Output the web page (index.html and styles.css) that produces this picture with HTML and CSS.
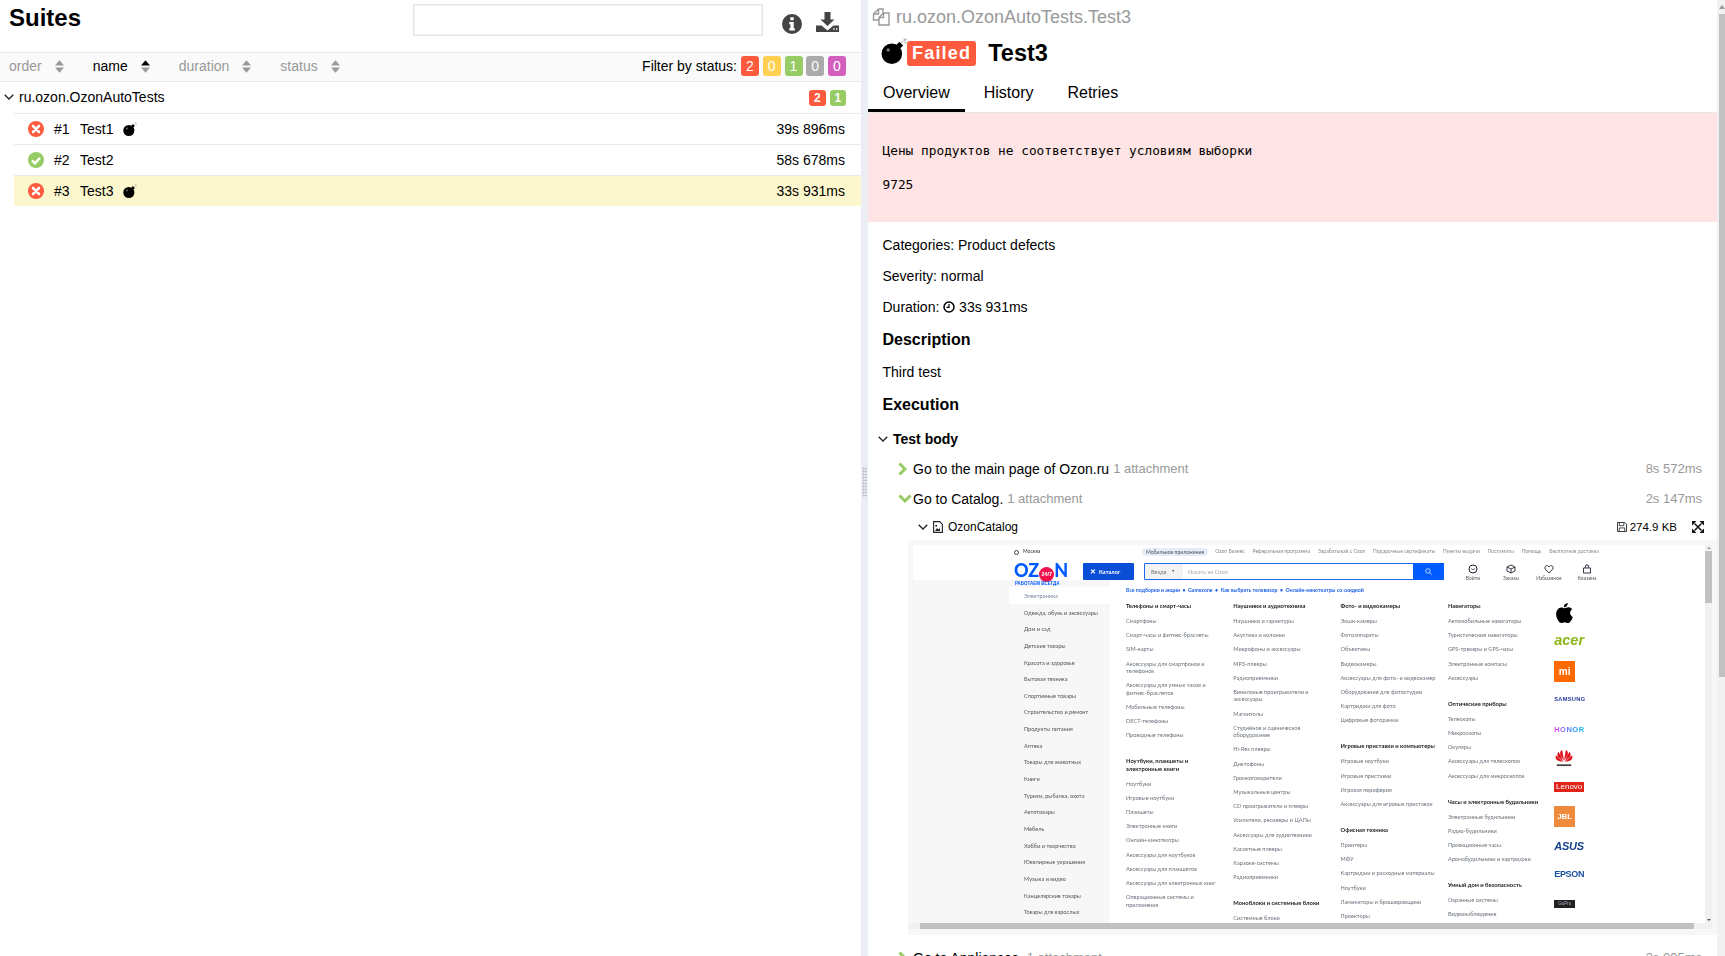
FILE: index.html
```html
<!DOCTYPE html>
<html lang="en">
<head>
<meta charset="utf-8">
<title>Allure Report</title>
<link rel="stylesheet" href="styles.css">
</head>
<body>
<svg class="sprite" xmlns="http://www.w3.org/2000/svg">
  <symbol id="bomb" viewBox="0 0 24 24">
    <circle cx="10" cy="14.5" r="9.5" fill="#000"/>
    <path d="M14 6.5l3-3 3.4 3.4-3 3z" fill="#000"/>
    <circle cx="6.6" cy="11" r="1.6" fill="#777"/>
    <path d="M19 4.5l1.6-2M21.5 0v2.4M23.8 1l-2.2 1.4M23.8 4.600l-2.400-.8" stroke="#999" stroke-width=".8" fill="none"/>
  </symbol>
  <symbol id="chev" viewBox="0 0 10 6"><path d="M.7.7L5 5 9.3.7" fill="none" stroke="#222" stroke-width="1.3"/></symbol>
  <symbol id="sort" viewBox="0 0 10 14"><path d="M5 0l5 6H0z" fill="#999"/><path d="M5 14l5-6H0z" fill="#999"/></symbol>
  <symbol id="sort-up" viewBox="0 0 10 14"><path d="M5 0l5 6H0z" fill="#000"/><path d="M5 14l5-6H0z" fill="#999"/></symbol>
  <symbol id="fail" viewBox="0 0 16 16"><circle cx="8" cy="8" r="8" fill="#fd5a3e"/><path d="M5 5l6 6M11 5l-6 6" stroke="#fff" stroke-width="2.6" stroke-linecap="round"/></symbol>
  <symbol id="pass" viewBox="0 0 16 16"><circle cx="8" cy="8" r="8" fill="#97cc64"/><path d="M4 8.5l3 2.8L12 5.7" fill="none" stroke="#fff" stroke-width="2.4"/></symbol>
  <symbol id="step-r" viewBox="0 0 9 14"><path d="M1.5 1.5L7 7l-5.500 5.500" fill="none" stroke="#97cc64" stroke-width="3"/></symbol>
  <symbol id="step-d" viewBox="0 0 14 9"><path d="M1.500 1.500L7 7l5.500-5.500" fill="none" stroke="#97cc64" stroke-width="3"/></symbol>
</svg>
<div class="app">
  <section class="left">
    <header class="left-head">
      <h2 class="suites-title">Suites</h2>
      <input class="search" type="text" aria-label="Search">
      <svg class="icon-info" viewBox="0 0 20 20"><path fill-rule="evenodd" fill="#444" d="M10 0a10 10 0 1 0 0 20a10 10 0 0 0 0-20zM8.300 3.300h3.400v3H8.300zM7.300 8h4.400v6.300h1.100v2.200H7.300v-2.200h1.100v-4.100H7.300z"/></svg>
      <svg class="icon-dl" viewBox="0 0 23 20"><path fill="#444" d="M8.500 0h6v7.500h4L11.500 14 4.500 7.500h4z"/><path fill="#444" fill-rule="evenodd" d="M0 13.500h5.500l6 5 6-5H23V20H0zM17.300 16.300h1.400v1.400h-1.400zM20 16.300h1.400v1.400H20z"/></svg>
    </header>
    <div class="sortbar">
      <div class="sort"><span>order</span><svg class="sort-ic"><use href="#sort"/></svg></div>
      <div class="sort sort-on"><span>name</span><svg class="sort-ic"><use href="#sort-up"/></svg></div>
      <div class="sort"><span>duration</span><svg class="sort-ic"><use href="#sort"/></svg></div>
      <div class="sort"><span>status</span><svg class="sort-ic"><use href="#sort"/></svg></div>
      <div class="filter">
        <span class="filter-label">Filter by status:</span>
        <b class="count c-red">2</b><b class="count c-yellow">0</b><b class="count c-green">1</b><b class="count c-gray">0</b><b class="count c-purple">0</b>
      </div>
    </div>
    <div class="group">
      <svg class="chev"><use href="#chev"/></svg>
      <span class="group-name">ru.ozon.OzonAutoTests</span>
      <div class="group-counts"><b class="mini-count c-red">2</b><b class="mini-count c-green">1</b></div>
    </div>
    <ul class="tests">
      <li class="test">
        <svg class="st"><use href="#fail"/></svg><span class="num">#1</span><span class="tname">Test1</span><svg class="bomb-s"><use href="#bomb"/></svg><span class="dur">39s 896ms</span>
      </li>
      <li class="test">
        <svg class="st"><use href="#pass"/></svg><span class="num">#2</span><span class="tname">Test2</span><span class="dur">58s 678ms</span>
      </li>
      <li class="test test-on">
        <svg class="st"><use href="#fail"/></svg><span class="num">#3</span><span class="tname">Test3</span><svg class="bomb-s"><use href="#bomb"/></svg><span class="dur">33s 931ms</span>
      </li>
    </ul>
  </section>

  <div class="gutter"><div class="grip"></div></div>

  <main class="right">
    <div class="hist-row">
      <svg class="icon-copy" viewBox="0 0 18 18"><path fill="none" stroke="#999" stroke-width="1.400" d="M6.500 1H11V5M6.500 1L1.500 6V12H7M6.500 1V6H1.500M7 9.500L11.500 5H17V17H7zM11.500 5V9.500H7"/></svg>
      <span class="hist-id">ru.ozon.OzonAutoTests.Test3</span>
    </div>
    <div class="title-row">
      <svg class="bomb-l"><use href="#bomb"/></svg>
      <span class="failed">Failed</span>
      <h2 class="test-title">Test3</h2>
    </div>
    <nav class="tabs">
      <a class="tab tab-on">Overview</a><a class="tab">History</a><a class="tab">Retries</a>
    </nav>
    <div class="error">
      <p class="err-line">Цены продуктов не соответствует условиям выборки</p>
      <p class="err-line">9725</p>
    </div>
    <div class="info">
      <div class="info-line">Categories: Product defects</div>
      <div class="info-line">Severity: normal</div>
      <div class="info-line">Duration: <svg class="clock" viewBox="0 0 12 12"><circle cx="6" cy="6" r="5" fill="none" stroke="#000" stroke-width="1.500"/><path d="M6 3v3.300H3.500" fill="none" stroke="#000" stroke-width="1.200"/></svg> 33s 931ms</div>
    </div>
    <h3 class="sec">Description</h3>
    <div class="info-line">Third test</div>
    <h3 class="sec">Execution</h3>
    <div class="body-head"><svg class="chev"><use href="#chev"/></svg><span>Test body</span></div>
    <div class="step">
      <svg class="step-r"><use href="#step-r"/></svg><span class="step-name">Go to the main page of Ozon.ru</span><span class="att">1 attachment</span><span class="step-dur">8s 572ms</span>
    </div>
    <div class="step step-open">
      <svg class="step-d"><use href="#step-d"/></svg><span class="step-name">Go to Catalog.</span><span class="att">1 attachment</span><span class="step-dur">2s 147ms</span>
    </div>
    <div class="attach">
      <svg class="chev"><use href="#chev"/></svg>
      <svg class="file" viewBox="0 0 10 12"><path d="M.6.6h6l2.800 2.800v8H.6z" fill="#fff" stroke="#222" stroke-width="1.100"/><path d="M2 10l2-3 1.500 1.500L7 7v3z" fill="#222"/><circle cx="3.200" cy="4.800" r="1" fill="#222"/></svg>
      <span class="attach-name">OzonCatalog</span>
      <svg class="save" viewBox="0 0 11 11"><path d="M.5.5h8l2 2v8H.5z" fill="none" stroke="#222"/><path d="M2.500 1v3h5V1M2.500 10V6.500h6V10" fill="none" stroke="#222" stroke-width=".9"/></svg>
      <span class="size">274.9 KB</span>
      <svg class="expand" viewBox="0 0 12 12"><path d="M2.500 2.500l7 7M9.500 2.500l-7 7" stroke="#111" stroke-width="1.500"/><path d="M0 0h4.500L0 4.500zM12 0v4.500L7.500 0zM12 12H7.500L12 7.500zM0 12V7.500L4.500 12z" fill="#111"/></svg>
    </div>

    <div class="shot">
      <div class="shot-view">
        <div class="mp">
          <div class="mp-head">
            <div class="mp-top">
              <span class="mp-city"><i class="mp-pin"></i>Москва</span>
              <span class="mp-pill">Мобильное приложение</span>
              <span class="mp-link">Ozon Бизнес</span>
              <span class="mp-link">Реферальная программа</span>
              <span class="mp-link">Зарабатывай с Ozon</span>
              <span class="mp-link">Подарочные сертификаты</span>
              <span class="mp-link">Пункты выдачи</span>
              <span class="mp-link">Постаматы</span>
              <span class="mp-link">Помощь</span>
              <span class="mp-link">Бесплатная доставка</span>
            </div>
            <div class="mp-bar">
              <div class="mp-logo">
                <span class="mp-ozon">OZ<i class="mp-247">24/7</i>N</span>
                <span class="mp-always">РАБОТАЕМ ВСЕГДА</span>
              </div>
              <div class="mp-cat"><span class="mp-x">✕</span>Каталог</div>
              <div class="mp-search">
                <span class="mp-where">Везде<i class="mp-tri">▼</i></span>
                <span class="mp-ph">Искать на Ozon</span>
                <span class="mp-go"><svg class="mp-lens" viewBox="0 0 10 10"><circle cx="4.200" cy="4.200" r="3.200" fill="none" stroke="#fff"/><path d="M6.500 6.500L9.500 9.500" stroke="#fff"/></svg></span>
              </div>
              <div class="mp-act">
                <svg class="mp-ic" viewBox="0 0 10 10"><circle cx="5" cy="5" r="4" fill="none" stroke="#223"/><path d="M3 4.500a2.500 2.500 0 0 0 4 0" fill="none" stroke="#223" stroke-width=".7"/></svg><span>Войти</span>
              </div>
              <div class="mp-act">
                <svg class="mp-ic" viewBox="0 0 10 10"><path d="M5 1l4 2v4L5 9 1 7V3zM1 3l4 2 4-2M5 5v4" fill="none" stroke="#223" stroke-width=".9"/></svg><span>Заказы</span>
              </div>
              <div class="mp-act">
                <svg class="mp-ic" viewBox="0 0 10 10"><path d="M5 9L1.200 5C-.5 2.500 3.500 0 5 3c1.500-3 5.500-.5 3.800 2z" fill="none" stroke="#223" stroke-width=".9"/></svg><span>Избранное</span>
              </div>
              <div class="mp-act">
                <svg class="mp-ic" viewBox="0 0 10 10"><path d="M1.500 4h7v5h-7zM3 4l1-3h2l1 3" fill="none" stroke="#223" stroke-width=".9"/></svg><span>Корзина</span>
              </div>
            </div>
          </div>
          <div class="mp-main">
            <ul class="mp-side">
              <li class="mp-side-on">Электроника</li>
              <li>Одежда, обувь и аксессуары</li>
              <li>Дом и сад</li>
              <li>Детские товары</li>
              <li>Красота и здоровье</li>
              <li>Бытовая техника</li>
              <li>Спортивные товары</li>
              <li>Строительство и ремонт</li>
              <li>Продукты питания</li>
              <li>Аптека</li>
              <li>Товары для животных</li>
              <li>Книги</li>
              <li>Туризм, рыбалка, охота</li>
              <li>Автотовары</li>
              <li>Мебель</li>
              <li>Хобби и творчество</li>
              <li>Ювелирные украшения</li>
              <li>Музыка и видео</li>
              <li>Канцелярские товары</li>
              <li>Товары для взрослых</li>
            </ul>
            <div class="mp-panel">
              <div class="mp-promo">Все подборки и акции&nbsp; •&nbsp; Gamezone&nbsp; •&nbsp; Как выбрать телевизор&nbsp; •&nbsp; Онлайн-кинотеатры со скидкой</div>
              <div class="mp-cols">
                <div class="mp-col">
                  <h5 class="mp-h">Телефоны и смарт-часы</h5>
                  <a>Смартфоны</a><a>Смарт-часы и фитнес-браслеты</a><a>SIM-карты</a><a>Аксессуары для смартфонов и телефонов</a><a>Аксессуары для умных часов и фитнес-браслетов</a><a>Мобильные телефоны</a><a>DECT-телефоны</a><a>Проводные телефоны</a>
                  <h5 class="mp-h mp-gap">Ноутбуки, планшеты и электронные книги</h5>
                  <a>Ноутбуки</a><a>Игровые ноутбуки</a><a>Планшеты</a><a>Электронные книги</a><a>Онлайн-кинотеатры</a><a>Аксессуары для ноутбуков</a><a>Аксессуары для планшетов</a><a>Аксессуары для электронных книг</a><a>Операционные системы и приложения</a>
                </div>
                <div class="mp-col">
                  <h5 class="mp-h">Наушники и аудиотехника</h5>
                  <a>Наушники и гарнитуры</a><a>Акустика и колонки</a><a>Микрофоны и аксессуары</a><a>MP3-плееры</a><a>Радиоприемники</a><a>Виниловые проигрыватели и аксессуары</a><a>Магнитолы</a><a>Студийное и сценическое оборудование</a><a>Hi-Res плееры</a><a>Диктофоны</a><a>Громкоговорители</a><a>Музыкальные центры</a><a>CD проигрыватели и плееры</a><a>Усилители, ресиверы и ЦАПы</a><a>Аксессуары для аудиотехники</a><a>Кассетные плееры</a><a>Караоке-системы</a><a>Радиоприемники</a>
                  <h5 class="mp-h mp-gap">Моноблоки и системные блоки</h5>
                  <a>Системные блоки</a>
                </div>
                <div class="mp-col mp-col-wide">
                  <h5 class="mp-h">Фото- и видеокамеры</h5>
                  <a>Экшн-камеры</a><a>Фотоаппараты</a><a>Объективы</a><a>Видеокамеры</a><a>Аксессуары для фото- и видеокамер</a><a>Оборудование для фотостудии</a><a>Картриджи для фото</a><a>Цифровые фоторамки</a>
                  <h5 class="mp-h mp-gap">Игровые приставки и компьютеры</h5>
                  <a>Игровые ноутбуки</a><a>Игровые приставки</a><a>Игровая периферия</a><a>Аксессуары для игровых приставок</a>
                  <h5 class="mp-h mp-gap">Офисная техника</h5>
                  <a>Принтеры</a><a>МФУ</a><a>Картриджи и расходные материалы</a><a>Ноутбуки</a><a>Ламинаторы и брошюровщики</a><a>Проекторы</a>
                </div>
                <div class="mp-col">
                  <h5 class="mp-h">Навигаторы</h5>
                  <a>Автомобильные навигаторы</a><a>Туристические навигаторы</a><a>GPS-трекеры и GPS-часы</a><a>Электронные компасы</a><a>Аксессуары</a>
                  <h5 class="mp-h mp-gap">Оптические приборы</h5>
                  <a>Телескопы</a><a>Микроскопы</a><a>Окуляры</a><a>Аксессуары для телескопов</a><a>Аксессуары для микроскопов</a>
                  <h5 class="mp-h mp-gap">Часы и электронные будильники</h5>
                  <a>Электронные будильники</a><a>Радио-будильники</a><a>Проекционные часы</a><a>Аромабудильники и картриджи</a>
                  <h5 class="mp-h mp-gap">Умный дом и безопасность</h5>
                  <a>Охранные системы</a><a>Видеонаблюдение</a>
                </div>
                <div class="mp-brands">
                  <div class="br"><svg class="br-apple" viewBox="0 0 20 24"><path fill="#000" d="M14 0c.2 2.800-2.200 5.300-4.800 5.100C9 2.500 11.600.2 14 0zM10 6.300c1.200 0 2.600-1.100 4.700-1.100 1.200 0 3.300.5 4.600 2.400-3.800 2.400-3.200 7.500.7 9.100-1 2.800-3.300 7.300-5.800 7.300-1.600 0-2.200-1-4-1s-2.500 1-4 1C3.400 24 0 18 0 13.500 0 8.700 3 5.400 6.200 5.400c1.600 0 2.900.9 3.800.9z"/></svg></div>
                  <div class="br br-acer">acer</div>
                  <div class="br"><span class="br-mi">mi</span></div>
                  <div class="br br-sam">SAMSUNG</div>
                  <div class="br br-honor">HONOR</div>
                  <div class="br"><svg class="br-hw" viewBox="0 0 20 20"><g fill="#e0141c"><path d="M10 13L8 1c-2 .5-3 3-2 6zM10 13l2-12c2 .5 3 3 2 6zM9.300 14L4 3C2.500 4.500 2 7 3.500 9zM10.700 14L16 3c1.500 1.500 2 4 .5 6zM9 14.500L1 7c-1 3 0 5 2.500 6zM11 14.500L19 7c1 3 0 5-2.500 6z"/></g><path d="M2 17h16v2H2z" fill="#444"/></svg></div>
                  <div class="br"><span class="br-len">Lenovo</span></div>
                  <div class="br"><span class="br-jbl">JBL</span></div>
                  <div class="br br-asus">ASUS</div>
                  <div class="br br-eps">EPSON</div>
                  <div class="br"><span class="br-gp">GoPro</span></div>
                </div>
              </div>
            </div>
          </div>
        </div>
        <div class="vbar"><i class="arrow-up"></i><i class="vthumb"></i><i class="arrow-dn"></i></div>
      </div>
      <div class="hbar"><i class="arrow-l"></i><i class="hthumb"></i><i class="arrow-r"></i></div>
    </div>

    <div class="step step-last">
      <svg class="step-r"><use href="#step-r"/></svg><span class="step-name">Go to Appliances.</span><span class="att">1 attachment</span><span class="step-dur">3s 095ms</span>
    </div>
  </main>

  <div class="pagebar"><i class="page-up"></i><i class="page-thumb"></i></div>
</div>
</body>
</html>
```
FILE: styles.css
```css
* { box-sizing: border-box; }
html, body { margin: 0; height: 100%; overflow: hidden; }
body { font: 14px/20px "Liberation Sans", Arial, sans-serif; color: #000; background: #fff; }
.sprite { width: 0; height: 0; position: absolute; }
ul { list-style: none; margin: 0; padding: 0; }
h2, h3, h5, p { margin: 0; }
svg { display: block; flex: none; }

.app { display: flex; height: 956px; overflow: hidden; }

/* left pane */
.left { width: 861px; flex: none; }
.left-head { display: flex; align-items: flex-start; height: 52px; padding-left: 9px; }
.suites-title { font-size: 24px; line-height: 28px; margin-top: 4px; font-weight: 700; }
.search { width: 350px; height: 32px; margin: 4px 0 0 auto; border: 1px solid #e5e5e5; outline: none; background: #fff; box-shadow: inset 0 0 0 .5px #eee; }
.icon-info { width: 20px; height: 20px; margin: 14px 0 0 19px; }
.icon-dl { width: 23px; height: 20px; margin: 12px 22px 0 14px; }

.sortbar { display: flex; align-items: center; height: 30px; padding: 0 0 2px 9px; background: #fafafa; border-top: 1px solid #ebebeb; border-bottom: 1px solid #ebebeb; color: #999; }
.sort { display: flex; align-items: center; gap: 13px; margin-right: 29px; }
.sort-on { color: #000; }
.sort-ic { width: 9px; height: 13px; }
.filter { display: flex; align-items: center; margin-left: auto; color: #000; padding-right: 15px; }
.filter-label { margin-right: 4px; }
.count { width: 18px; height: 20px; line-height: 20px; margin-left: 3.750px; border-radius: 3px; color: #fff; font-weight: 400; font-size: 14px; text-align: center; }
.filter-label + .count { margin-left: 0; }
.c-red { background: #fd5a3e; }
.c-yellow { background: #ffd050; }
.c-green { background: #97cc64; }
.c-gray { background: #aaa; }
.c-purple { background: #d35ebe; }

.group { display: flex; align-items: center; height: 31px; padding: 0 0 2px 4px; }
.chev { width: 10px; height: 6px; }
.group-name { margin-left: 5px; }
.group-counts { display: flex; gap: 4px; margin: 3px 0 0 auto; padding-right: 15px; }
.mini-count { width: 16.500px; height: 16px; line-height: 16px; border-radius: 3px; color: #fff; font-size: 12px; text-align: center; }

.tests { margin-left: 14px; }
.test { display: flex; align-items: center; height: 31px; border-top: 1px solid #ebebeb; padding-left: 14px; }
.test-on { background: #fdf7cd; }
.st { width: 16px; height: 16px; }
.num { margin-left: 10px; width: 26px; }
.tname { width: 43px; }
.bomb-s { width: 14px; height: 14px; }
.dur { margin-left: auto; padding-right: 16px; }

/* gutter */
.gutter { width: 7px; flex: none; background: #ebeef2; display: flex; align-items: flex-start; justify-content: center; }
.grip { width: 5px; height: 30px; margin-top: 467px; background-image: radial-gradient(circle, #c4c8cc 1px, transparent 1.100px); background-size: 2.500px 3px; }

/* right pane */
.right { width: 849px; flex: none; overflow: hidden; }
.hist-row { display: flex; align-items: center; height: 33px; padding-left: 4px; color: #999; }
.icon-copy { width: 18px; height: 18px; }
.hist-id { font-size: 18px; margin-left: 6px; }
.title-row { display: flex; align-items: center; height: 41px; padding-left: 13px; }
.bomb-l { width: 26px; height: 26px; margin-top: -6px; }
.failed { height: 25px; line-height: 25px; padding: 0 5px; background: #fd5a3e; color: #fff; border-radius: 3px; font-size: 18px; font-weight: 700; letter-spacing: 1.200px; }
.test-title { font-size: 23.500px; line-height: 28px; margin: -2px 0 0 12px; font-weight: 700; }
.tabs { display: flex; height: 39px; border-bottom: 1px solid #e6e6e6; }
.tab { font-size: 16px; line-height: 21px; padding: 8px 15px 0; margin-right: 4px; height: 38px; }
.tab-on { border-bottom: 3px solid #000; margin-right: 4px; }
.error { height: 109px; padding: 28px 14.500px 0; background: #fee4e4; }
.err-line { font: 12.800px/20px "DejaVu Sans Mono", monospace; margin-bottom: 14px; }
.info { padding-top: 8px; }
.info-line { height: 31px; line-height: 31px; padding-left: 14.500px; }
.clock { display: inline-block; width: 12px; height: 12px; vertical-align: -1px; }
.sec { height: 34px; line-height: 34px; font-size: 16px; font-weight: 700; padding-left: 14.500px; }
.body-head { display: flex; align-items: center; height: 30px; margin-top: 2px; padding-left: 10px; font-weight: 700; }
.body-head span { margin-left: 5px; }
.step { display: flex; align-items: center; height: 30px; padding-left: 30px; }
.step-open { height: 29px; }
.step-r { width: 9px; height: 14px; }
.step-d { width: 14px; height: 9px; }
.step-name { margin-left: 6px; }
.step-open .step-name { margin-left: 1px; }
.att { margin-left: 4px; color: #999; font-size: 13px; }
.step-dur { margin-left: auto; padding-right: 15px; color: #999; font-size: 13px; }
.step-last { margin-top: 8px; }
.attach { display: flex; align-items: center; height: 27px; padding-left: 50px; font-size: 12px; }
.file { width: 10px; height: 12px; margin-left: 5px; }
.attach-name { margin-left: 5px; }
.save { width: 10px; height: 10px; margin-left: auto; }
.size { margin-left: 3px; font-size: 11.500px; }
.expand { width: 12px; height: 12px; margin: 0 13px 0 15px; }

/* embedded screenshot */
.shot { margin-left: 40px; width: 809px; height: 395px; background: #f7f7f7; padding-top: 5px; }
.shot-view { display: flex; height: 378px; width: 804px; }
.mp { width: 797px; height: 378px; overflow: hidden; font-family: Lato, "Liberation Sans", sans-serif; font-size: 5.600px; line-height: 7.400px; color: #6a737c; filter: blur(.3px); }
.mp-head { height: 35px; margin-left: 5px; background: #fff; padding-left: 101px; }
.mp-top { display: flex; align-items: center; height: 18px; padding-bottom: 4px; font-size: 5.100px; }
.mp-city { display: flex; align-items: center; width: 128px; color: #333; font-size: 5px; }
.mp-pin { width: 5px; height: 5px; border: 1.500px solid #444; border-radius: 50%; margin-right: 4px; }
.mp-pill { background: #e6ecfa; border-radius: 4px; padding: 0 4px; height: 8px; line-height: 8px; margin-right: 7px; color: #555; }
.mp-link { margin-right: 7.700px; color: #888; white-space: nowrap; }
.mp-bar { display: flex; align-items: flex-start; height: 17px; }
.mp-logo { width: 69px; }
.mp-ozon { display: block; color: #005bff; font: 900 18px/14px Lato, sans-serif; }
.mp-247 { display: inline-block; width: 15px; height: 15px; line-height: 15px; background: #f1114c; border-radius: 50%; color: #fff; font: 700 5.500px/15px "Liberation Sans", sans-serif; text-align: center; vertical-align: 1px; }
.mp-always { display: block; color: #005bff; font: 700 4.500px/4px "Liberation Sans", sans-serif; margin-left: 1px; }
.mp-cat { width: 51px; height: 17px; display: flex; align-items: center; gap: 3px; padding-left: 7px; background: #0a4fd6; color: #fff; font-weight: 700; font-size: 5.600px; border-radius: 1px; }
.mp-x { font-size: 7px; }
.mp-search { display: flex; align-items: center; width: 300px; height: 17px; margin-left: 10px; border: 1px solid #1f66f0; border-radius: 1px; background: #fff; }
.mp-where { display: flex; align-items: center; gap: 5px; width: 38px; height: 15px; padding-left: 6px; background: #f2f2f2; color: #777; }
.mp-tri { font-size: 3.500px; font-style: normal; color: #444; }
.mp-ph { margin-left: 5px; color: #aaa; }
.mp-go { margin-left: auto; width: 31px; height: 17px; display: flex; align-items: center; justify-content: center; background: #005bff; margin-right: -1px; }
.mp-lens { width: 7px; height: 7px; }
.mp-act { width: 38px; display: flex; flex-direction: column; align-items: center; color: #555; font-size: 5px; line-height: 6px; margin-top: 1px; }
.mp-search + .mp-act { margin-left: 10px; }
.mp-ic { width: 10px; height: 10px; margin-bottom: 1px; }
.mp-main { display: flex; height: 343px; }
.mp-side { width: 202px; padding: 7px 0 0 101px; flex: none; color: #555; }
.mp-side li { height: 16.650px; line-height: 17px; padding-left: 15px; white-space: nowrap; }
.mp-side .mp-side-on { background: #fff; color: #7a86a0; }
.mp-panel { flex: 1; background: #fff; padding: 7px 0 0 16px; min-width: 0; }
.mp-promo { color: #1a5fe8; font-weight: 700; font-size: 5.200px; height: 15px; white-space: nowrap; }
.mp-cols { display: flex; }
.mp-col { width: 107.300px; padding-right: 14px; flex: none; }
.mp-col-wide { padding-right: 6px; }
.mp-col a { display: block; margin-bottom: 6.800px; }
.mp-h { font-size: 5.800px; line-height: 7.400px; font-weight: 700; color: #222; margin: 0 -6px 7.600px 0; }
.mp-gap { margin-top: 18.600px; }
.mp-brands { width: 40px; margin-left: -1px; margin-top: -3.700px; }
.br { height: 29.100px; display: flex; align-items: center; white-space: nowrap; font-family: "Liberation Sans", sans-serif; }
.br-apple { width: 17px; height: 20px; margin-left: 2px; }
.br-acer { color: #8fb51a; font: italic 700 14.500px/24px "Liberation Sans", sans-serif; padding-bottom: 3px; }
.br-mi { width: 21px; height: 21px; background: #ff6a00; color: #fff; font-weight: 700; font-size: 10px; line-height: 21px; text-align: center; }
.br-sam { color: #2b3a9b; font-weight: 700; font-size: 5.700px; letter-spacing: .3px; }
.br-honor { font-weight: 700; font-size: 7.500px; letter-spacing: .5px; background: linear-gradient(90deg, #f23ff0, #1d8ff5 50%, #10e8f4); -webkit-background-clip: text; background-clip: text; color: transparent; }
.br-hw { width: 18px; height: 18px; margin-left: 1px; }
.br-len { width: 30px; height: 10px; line-height: 10px; background: #e2231a; color: #fff; font-size: 8px; text-align: center; }
.br-jbl { width: 21px; height: 21px; line-height: 21px; background: #f08a3c; color: #fff; font-weight: 700; font-size: 8px; text-align: center; }
.br-asus { color: #14418c; font: italic 700 11px/26px "Liberation Sans", sans-serif; letter-spacing: -.2px; }
.br-eps { color: #1a4fa0; font-weight: 700; font-size: 9px; letter-spacing: -.3px; }
.br-gp { width: 21px; height: 8px; line-height: 8px; background: #222; color: #aac; font-size: 4.500px; text-align: center; }

.vbar { width: 7px; background: #f1f1f1; display: flex; flex-direction: column; align-items: center; }
.arrow-up, .arrow-dn { width: 0; height: 0; display: block; margin: 2px 0; border-left: 2px solid transparent; border-right: 2px solid transparent; }
.arrow-up { border-bottom: 2px solid #999; }
.arrow-dn { border-top: 2px solid #555; margin-top: auto; }
.vthumb { display: block; width: 7px; height: 52px; background: #c1c1c1; }
.hbar { display: flex; align-items: stretch; width: 804px; height: 6px; background: #f1f1f1; }
.arrow-l { width: 12px; }
.hthumb { width: 774px; background: #c1c1c1; }

/* page scrollbar */
.pagebar { width: 8px; flex: none; background: #f1f1f1; padding-left: 2px; display: flex; flex-direction: column; }
.page-up { display: block; width: 0; height: 0; margin: 5px 0; border-left: 3px solid transparent; border-right: 3px solid transparent; border-bottom: 4px solid #999; }
.page-thumb { height: 663px; background: #c1c1c1; display: block; }
```
